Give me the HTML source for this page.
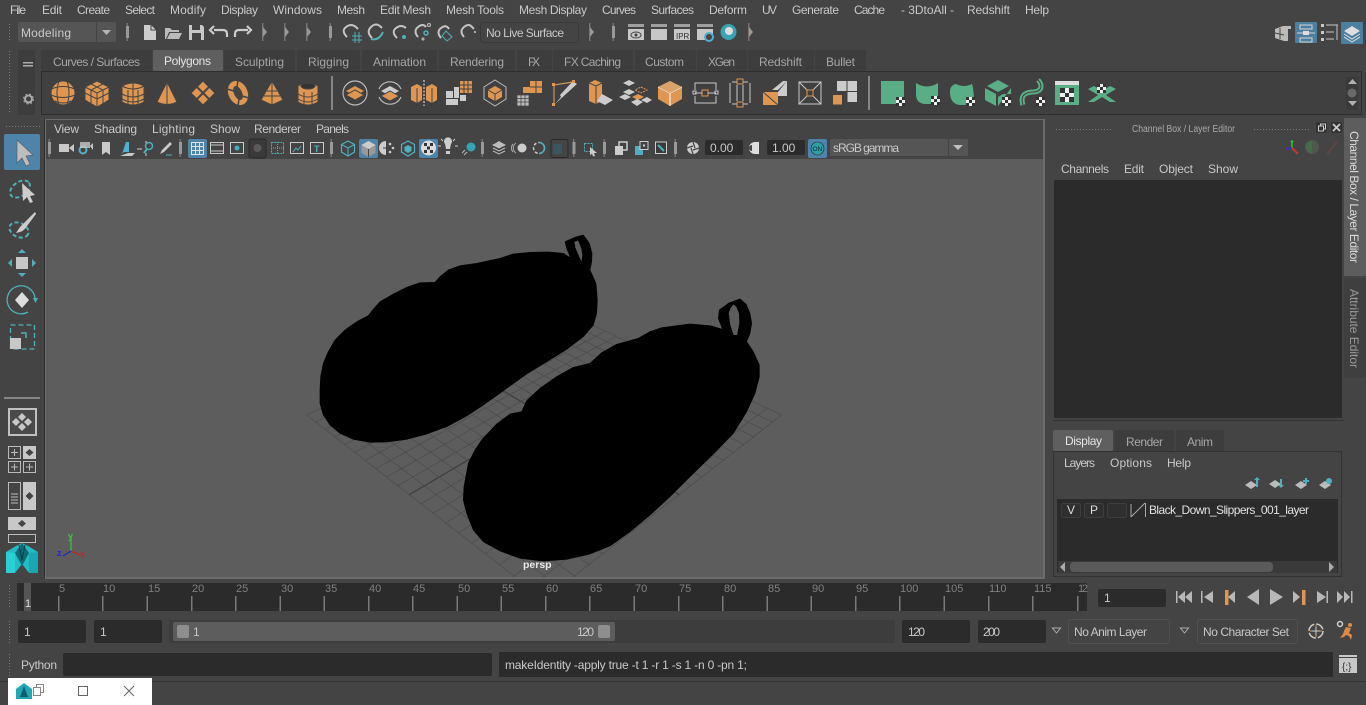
<!DOCTYPE html>
<html><head><meta charset="utf-8"><title>Maya</title>
<style>
html,body{margin:0;padding:0;background:#444;width:1366px;height:705px;overflow:hidden}
svg{display:block}
text{font-family:"Liberation Sans",sans-serif;font-size:12px;fill:#c8c8c8}
.tab{fill:#a6a6a6}
.d{fill:#2b2b2b}
.num{font-size:11px;fill:#808080}
.w{fill:#dcdcdc}
</style></head><body>
<svg width="1366" height="705" viewBox="0 0 1366 705" xmlns="http://www.w3.org/2000/svg">
<defs>
<pattern id="dots" width="3" height="3" patternUnits="userSpaceOnUse"><rect width="1" height="1" fill="#7a7a7a"/></pattern>
<clipPath id="vp"><rect x="46" y="159" width="997" height="418"/></clipPath>
<g id="knob"><rect x="-1" y="-9" width="1.4" height="18" fill="#777"/><rect x="-1.5" y="-6" width="3" height="12" fill="#999"/></g>
<g id="tsep"><rect x="-1" y="-9" width="1.4" height="18" fill="#777"/><path d="M0-5L4 0L0 5Z" fill="#999"/></g>
<g id="chk"><rect width="9" height="9" fill="#eee"/><rect width="3" height="3" fill="#333"/><rect x="6" width="3" height="3" fill="#333"/><rect x="3" y="3" width="3" height="3" fill="#333"/><rect y="6" width="3" height="3" fill="#333"/><rect x="6" y="6" width="3" height="3" fill="#333"/></g>
</defs>
<rect width="1366" height="705" fill="#444"/>

<!-- menu bar -->
<g>
<text x="10" y="14" textLength="16">File</text><text x="42" y="14" textLength="20">Edit</text><text x="77" y="14" textLength="33">Create</text><text x="125" y="14" textLength="30">Select</text><text x="170" y="14" textLength="36">Modify</text><text x="221" y="14" textLength="37">Display</text><text x="273" y="14" textLength="49">Windows</text><text x="337" y="14" textLength="28">Mesh</text><text x="380" y="14" textLength="51">Edit Mesh</text><text x="446" y="14" textLength="58">Mesh Tools</text><text x="519" y="14" textLength="68">Mesh Display</text><text x="602" y="14" textLength="34">Curves</text><text x="651" y="14" textLength="43">Surfaces</text><text x="709" y="14" textLength="38">Deform</text><text x="762" y="14" textLength="15">UV</text><text x="792" y="14" textLength="47">Generate</text><text x="854" y="14" textLength="31">Cache</text><text x="901" y="14" textLength="53">- 3DtoAll -</text><text x="967" y="14" textLength="43">Redshift</text><text x="1025" y="14" textLength="24">Help</text>
</g>

<!-- status line -->
<rect x="8" y="23" width="4" height="19" fill="url(#dots)"/>
<rect x="18" y="22" width="98" height="20" rx="2" fill="#555"/><rect x="96" y="22" width="1" height="20" fill="#444"/>
<path d="M102 30h9l-4.500 5z" fill="#b5b5b5"/>
<text x="21" y="37" textLength="50" fill="#d0d0d0">Modeling</text>
<use href="#knob" x="127.500" y="32"/>
<path d="M144 25h7l5 5v10h-12z" fill="#ccc"/><path d="M151 25v5h5" fill="none" stroke="#444"/>
<path d="M165 39V28h5l2 2h7v2h-10l-3 7zM167 39l3-6h12l-3 6z" fill="#bbb"/>
<path d="M189 25h13l2 2v13h-15z" fill="#c8c8c8"/><rect x="192" y="25" width="8" height="5" fill="#444"/><rect x="192" y="33" width="9" height="7" fill="#444"/>
<path d="M227 37v-3q0-4-4-4h-9M214 26l-4 4 4 4" fill="none" stroke="#ccc" stroke-width="2.200"/>
<path d="M235 37v-3q0-4 4-4h9M247 26l4 4-4 4" fill="none" stroke="#ccc" stroke-width="2.200"/>
<use href="#tsep" x="263" y="32"/><use href="#tsep" x="285" y="32"/><use href="#tsep" x="307" y="32"/><use href="#knob" x="330.500" y="32"/>
<g fill="none" stroke="#c4c4c4" stroke-width="2">
<path d="M347 37q-6-6-1-10t10 0l2 2"/><path d="M352 36h10M352 40h10M355 32v11M359 32v11" stroke="#4fb0b8" stroke-width="1"/>
<path d="M372 38q-6-6-1-11t10 0l1 1"/><path d="M371 39q8 2 12-7" stroke="#4fb0b8"/>
<path d="M397 38q-6-6-1-10t10 0"/><circle cx="404" cy="37" r="2" fill="#4fb0b8" stroke="none"/>
<path d="M418 37q-5-6 0-10t8 0"/><circle cx="429" cy="25" r="1.500" stroke-width="1"/><circle cx="426" cy="33" r="2" stroke="#4fb0b8" stroke-width="1.500"/><circle cx="423" cy="39" r="1" stroke-width="1"/>
<path d="M441 38q-5-6 0-10t8 1"/><path d="M446 31l6 6-5 4-5-5z" stroke="#4fb0b8" stroke-width="1"/>
<path d="M464 37q-5-6 0-10t8 0l2 2"/><circle cx="475" cy="32" r="1" fill="#ccc" stroke="none"/>
</g>
<rect x="480.500" y="22.500" width="98" height="20" rx="3" fill="#444" stroke="#3a3a3a"/>
<text x="486" y="37" textLength="78">No Live Surface</text>
<use href="#tsep" x="590" y="32"/><use href="#knob" x="613.500" y="32"/>
<g fill="#c8c8c8">
<path d="M628 24h16v3h-16z" opacity=".7"/><rect x="628" y="29" width="16" height="11"/><ellipse cx="636" cy="35" rx="5" ry="3" fill="none" stroke="#444"/><circle cx="636" cy="35" r="1.500" fill="#444"/>
<rect x="651" y="24" width="16" height="3" opacity=".7"/><rect x="651" y="29" width="16" height="11"/>
<rect x="674" y="24" width="16" height="3" opacity=".7"/><rect x="674" y="29" width="16" height="11"/><text x="676" y="39" style="font-size:8px;fill:#333">IPR</text>
<rect x="697" y="24" width="16" height="3" opacity=".7"/><rect x="697" y="29" width="16" height="11"/>
</g>
<circle cx="709" cy="37" r="4" fill="#444" stroke="#4fb0d0" stroke-width="2"/>
<circle cx="728.500" cy="32" r="8" fill="#35a5b5"/><circle cx="729" cy="31" r="4" fill="#ddd"/>
<use href="#tsep" x="749" y="32"/>
<!-- top right -->
<path d="M1275 29l8-3 8 0v3h-3v12h-4l-9-3z" fill="#bbb"/><path d="M1280 28v11M1275 33l9 2" stroke="#444"/>
<rect x="1295" y="22" width="22" height="21" rx="1" fill="#4d7f9f"/><g fill="none" stroke="#d5d5d5"><rect x="1300" y="25" width="12" height="4"/><rect x="1300" y="38" width="12" height="4"/><path d="M1297 33h6M1309 33h6"/></g><rect x="1303" y="31" width="6" height="4" fill="#ddd"/>
<g fill="none" stroke="#c8c8c8"><path d="M1326 25h12M1326 32h8M1326 39h8M1337 25v15"/></g><g fill="#c8c8c8"><rect x="1321" y="24" width="3" height="3"/><rect x="1321" y="31" width="3" height="3"/><rect x="1321" y="38" width="3" height="3"/></g>
<rect x="1341" y="22" width="22" height="22" rx="1" fill="#4d7f9f"/><path d="M1352 26l8 5-8 5-8-5z" fill="#ddd"/><path d="M1344 34l8 5 8-5M1344 37l8 5 8-5" fill="none" stroke="#ddd"/>

<!-- tabs -->
<rect x="8" y="50" width="4" height="62" fill="url(#dots)"/>
<rect x="18" y="50" width="17" height="65" fill="#3d3d3d"/>
<rect x="23" y="62" width="10" height="1.500" fill="#aaa"/><rect x="23" y="65" width="10" height="1.500" fill="#aaa"/>
<circle cx="28.500" cy="99" r="3.500" fill="none" stroke="#aaa" stroke-width="2"/><circle cx="28.500" cy="99" r="5" fill="none" stroke="#aaa" stroke-width="1" stroke-dasharray="2 2"/>
<rect x="41.500" y="71.500" width="1320" height="43" fill="#404040" stroke="#2e2e2e"/>
<g fill="#3d3d3d">
<path d="M41 71V52q0-2 2-2h109v21z"/><rect x="224" y="50" width="71" height="21" rx="2"/><rect x="297" y="50" width="63" height="21" rx="2"/><rect x="362" y="50" width="75" height="21" rx="2"/><rect x="439" y="50" width="76" height="21" rx="2"/><rect x="517" y="50" width="35" height="21" rx="2"/><rect x="553" y="50" width="80" height="21" rx="2"/><rect x="635" y="50" width="61" height="21" rx="2"/><rect x="697" y="50" width="50" height="21" rx="2"/><rect x="748" y="50" width="66" height="21" rx="2"/><rect x="815" y="50" width="51" height="21" rx="2"/>
</g>
<rect x="153" y="50" width="70" height="21" rx="2" fill="#5f5f5f"/>
<text class="tab" x="53" y="66" textLength="87">Curves / Surfaces</text><text x="164" y="65" textLength="47" style="fill:#e4e4e4">Polygons</text><text class="tab" x="235" y="66" textLength="49">Sculpting</text><text class="tab" x="308" y="66" textLength="41">Rigging</text><text class="tab" x="373" y="66" textLength="53">Animation</text><text class="tab" x="450" y="66" textLength="54">Rendering</text><text class="tab" x="528" y="66" textLength="12">FX</text><text class="tab" x="564" y="66" textLength="57">FX Caching</text><text class="tab" x="645" y="66" textLength="39">Custom</text><text class="tab" x="708" y="66" textLength="27">XGen</text><text class="tab" x="759" y="66" textLength="43">Redshift</text><text class="tab" x="826" y="66" textLength="29">Bullet</text>

<!-- shelf orange icons -->
<g fill="#df9650" stroke="#444" stroke-width="1">
<g transform="translate(63,93)"><circle r="12"/><path d="M-11.500-4Q0-9 11.500-4M-12 2Q0 7 12 2M-8 8Q0 12 8 8M-4-12Q-8 0-4 12M4-12Q8 0 4 12" fill="none"/></g>
<g transform="translate(97,94)"><path d="M0-13L12-7V6L0 13-12 6V-7Z"/><path d="M-12-7L0-1 12-7M0-1V13M-6-10L6-4V10M6-10L-6-4V10M-12-1L0 5 12-1" fill="none"/></g>
<g transform="translate(133,94)"><path d="M-11-8Q0-14 11-8V8Q0 14-11 8Z"/><path d="M-11-8Q0-2 11-8M-11 0Q0 6 11 0M-11 5Q0 11 11 5M0-12V12M-5-4V11M5-4V11" fill="none"/></g>
<g transform="translate(167,95)"><path d="M0-13L10 7Q0 12-10 7Z"/><path d="M0-13V10" fill="none"/></g>
<g transform="translate(203,93)"><path d="M0-12L12 0 0 12-12 0Z"/><path d="M-6-6L6 6M6-6L-6 6" stroke-width="2" fill="none"/></g>
<g transform="translate(238,93)"><ellipse rx="10" ry="13" transform="rotate(-25)"/><ellipse rx="3.500" ry="7" fill="#444" transform="rotate(-25)"/><path d="M-11-4L-4-2M4 3L11 5M0-13L-1-6M1 6L0 13" fill="none" stroke-width="1.500"/></g>
<g transform="translate(272,94)"><path d="M0-13L11 6 0 11-11 6Z"/><path d="M0-13V11M-5-3L5-3M-8 2L8 2" fill="none"/></g>
<g transform="translate(308,94)"><path d="M-10-8Q0-14 10-8V8Q0 14-10 8Z"/><ellipse cy="-8" rx="7" ry="3" fill="#333"/><path d="M-10 0Q0 6 10 0M-10 5Q0 11 10 5M-4-2V11M4-2V11" fill="none"/></g>
</g>
<rect x="331" y="76" width="2" height="34" fill="#858585"/>
<!-- combine etc -->
<g transform="translate(355,93)"><circle r="12" fill="none" stroke="#bbb" stroke-width="1.200"/><path d="M0-7L9-2 0 3-9-2Z" fill="#df9650"/><path d="M-9 2L0 7 9 2 0 -3Z" fill="#df9650" stroke="#444"/></g>
<g transform="translate(390,93)"><path d="M-11-4A12 12 0 0 1 11-4M-11 4A12 12 0 0 0 11 4" fill="none" stroke="#bbb" stroke-width="1.200"/><path d="M0-7L9-2 0 3-9-2Z" fill="#ccc"/><path d="M-9 3L0 8 9 3 0-2Z" fill="#df9650" stroke="#444"/></g>
<g transform="translate(424,93)"><path d="M-13-6L-7-9-2-6V7L-7 10-13 7Z" fill="#df9650"/><path d="M2-6L8-9 13-6V7L8 10 2 7Z" fill="#df9650"/><path d="M-7-5V10M8-5V10" stroke="#444"/><path d="M0-13V13" stroke="#eee" stroke-dasharray="2 1.500"/></g>
<g transform="translate(459,93)"><rect x="1" y="-12" width="12" height="12" fill="#df9650"/><path d="M5-12v12M9-12v12M1-8h12M1-4h12" stroke="#444"/><rect x="-13" y="-2" width="7" height="7" fill="#ccc"/><rect x="-5" y="-6" width="5" height="11" fill="#ccc"/><rect x="-13" y="6" width="12" height="6" fill="#ccc"/><rect x="1" y="2" width="6" height="6" fill="#ccc"/></g>
<g transform="translate(495,93)"><path d="M0-13L11-6V6L0 13-11 6V-6Z" fill="none" stroke="#bbb"/><path d="M0-7L7-3V4L0 8-7 4V-3Z" fill="#df9650"/><path d="M-7-3L0 1 7-3M0 1V8" stroke="#444" fill="none"/></g>
<g transform="translate(530,93)"><rect x="0" y="-12" width="12" height="12" fill="#df9650"/><rect x="-7" y="-6" width="7" height="6" fill="#df9650"/><path d="M6-12v12M0-6h12" stroke="#444"/><path d="M-13 2h12v11h-12zM-13 5.500h12M-13 9h12M-9 2v11M-5 2v11" fill="#bbb" stroke="#444" stroke-width=".8"/></g>
<g transform="translate(565,93)"><path d="M-11-8L8-11M-11-8V11" fill="none" stroke="#c8955c" stroke-width="1.200"/><path d="M-10 11L12-9 8-12-5 2 -4 4Z" fill="#ccc"/><rect x="-13" y="-10" width="3" height="3" fill="#df9650"/><rect x="7" y="-13" width="3" height="3" fill="#df9650"/><rect x="-13" y="10" width="3" height="3" fill="#df9650"/></g>
<g transform="translate(600,93)"><path d="M-11-10L-5-13 2-10V8L-4 11-11 8Z" fill="#df9650"/><path d="M-11-10L-4-7 2-10M-4-7V11" stroke="#444" fill="none"/><path d="M2 1L13 7 5 12-3 8Z" fill="#ccc"/></g>
<g transform="translate(635,93)"><path d="M-6-13L0-10-6-7-12-10Z" fill="#ccc"/><path d="M6-6L12-3 6 0 0-3Z" fill="none" stroke="#df9650" stroke-dasharray="2 1"/><path d="M-12-1L-6-4 0-1-6 2Z" fill="#ccc"/><path d="M-3 4L3 1 9 4 3 7Z" fill="#df9650"/><path d="M-16 4L-10 1-4 4-10 7Z" fill="#ccc"/><path d="M6 7L12 4 17 7 12 10Z" fill="#ccc"/><path d="M-4 9L2 6 8 9 2 13Z" fill="#ccc"/></g>
<g transform="translate(670,93)"><path d="M0-12L12-6V6L0 13-12 6V-6Z" fill="#df9650"/><path d="M-12-6L0 0 12-6M0 0V13" stroke="#eee" stroke-width="1.200" fill="none"/><path d="M0-12L12-6 0 0-12-6Z" fill="#d8a26a"/></g>
<g fill="none" stroke="#c8c8c8">
<g transform="translate(705,93)"><path d="M-10-3V-10H11V-3M-10 3V10H11V3"/><rect x="-3" y="-3" width="6" height="6" stroke="#df9650"/><path d="M-10 0H-3M3 0H11"/><rect x="-12" y="-2" width="3" height="3" /><rect x="10" y="-2" width="3" height="3"/></g>
<g transform="translate(740,93)"><path d="M-10-10V10M10-10V10M-3-8V8M3-8V8M-8-11H-3M3-11H8M-8 11H-3M3 11H8"/><rect x="-3" y="-14" width="6" height="5" stroke="#df9650"/><rect x="-3" y="9" width="6" height="5" stroke="#df9650"/></g>
<g transform="translate(810,93)"><rect x="-11" y="-11" width="22" height="22"/><path d="M-11-11L-3-3M11-11L3-3M-11 11L-3 3M11 11L3 3"/><rect x="-3" y="-3" width="6" height="6" stroke="#df9650"/></g>
</g>
<g transform="translate(775,93)"><path d="M-12-1H3V12H-12Z" fill="#df9650"/><path d="M-12-1L3 12" stroke="#444"/><path d="M3-1L12-12V3H3Z" fill="#ccc"/><path d="M-3-3L8-12H12L3-3Z" fill="#ccc"/></g>
<g transform="translate(845,93)"><rect x="-8" y="-12" width="9.500" height="10" fill="#ccc"/><rect x="2.500" y="-12" width="9.500" height="10" fill="#ccc"/><rect x="2.500" y="-1" width="9.500" height="10" fill="#ccc"/><rect x="-12" y="2" width="9" height="9.500" fill="#df9650"/></g>
<rect x="868" y="76" width="2" height="34" fill="#858585"/>
<!-- green -->
<g fill="#5aae86">
<rect x="881" y="81" width="23" height="23"/><use href="#chk" x="896" y="97"/>
<path d="M916 83Q927 90 938 83V104H926Q916 104 916 94Z"/><use href="#chk" x="931" y="96"/>
<path d="M950 92Q950 85 956 84Q964 88 972 84Q974 90 974 105H960Q950 104 950 92Z"/><use href="#chk" x="966" y="97"/>
<path d="M998 80l11 6-11 6-11-6zM985 88l11 6v12l-11-6zM1011 88v6h-8l-5 3v9z"/><use href="#chk" x="1002" y="97"/>
<path d="M1023 105q-4-12 9-13q9 0 9-6q0-3-3-6" fill="none" stroke="#5aae86" stroke-width="5"/><path d="M1023 105q-4-12 9-13q9 0 9-6q0-3-3-6" fill="none" stroke="#404040" stroke-width="1"/><use href="#chk" x="1036" y="97"/>
<rect x="1055" y="81" width="24" height="24"/><rect x="1055" y="81" width="24" height="4" fill="#ddd"/><rect x="1060" y="88" width="14" height="14" fill="#eee"/><g fill="#333"><rect x="1060" y="88" width="5" height="5"/><rect x="1069" y="88" width="5" height="5"/><rect x="1065" y="93" width="4" height="4"/><rect x="1060" y="97" width="5" height="5"/><rect x="1069" y="97" width="5" height="5"/></g>
<path d="M1088 89l6-3 8 5 8-5 6 3-10 6 10 7h-6l-8-5-8 5h-6l10-7z"/><use href="#chk" x="1097" y="84"/>
</g>
<!-- shelf scroller -->
<rect x="1346" y="77" width="12" height="33" fill="#3a3a3a"/><path d="M1348 84h9l-4.500-5zM1348 101h9l-4.500 5z" fill="#b0b0b0"/><circle cx="1352" cy="93" r="4.500" fill="#6a6a6a"/>

<!-- left toolbar -->
<rect x="4" y="125" width="36" height="4" fill="url(#dots)"/>
<rect x="4" y="134" width="36" height="36" rx="2" fill="#4f84aa"/>
<path d="M17 140L33 155 26 156 30 164 26 166 22 158 17 163Z" fill="#bdbdbd" stroke="#555" stroke-width=".6"/>
<ellipse cx="20" cy="189" rx="11" ry="7" transform="rotate(-35 20 189)" fill="none" stroke="#4fb0b8" stroke-width="2" stroke-dasharray="4 2.500"/>
<path d="M22 183L35 195 30 196 33 202 30 203 27 197 23 201Z" fill="#ccc"/>
<ellipse cx="19" cy="230" rx="10" ry="7" transform="rotate(25 19 230)" fill="none" stroke="#4fb0b8" stroke-width="2" stroke-dasharray="4 2.500"/>
<path d="M35 212L20 227 16 233Q24 232 27 226L36 214Z" fill="#ccc"/>
<rect x="16" y="257" width="12" height="12" fill="#c8c8c8"/>
<path d="M18 253l4-4 4 4zM18 273l4 4 4-4zM12 259l-4 4 4 4zM32 259l4 4-4 4z" fill="#4fb0b8"/>
<path d="M22 292l7 8-7 8-7-8z" fill="#ddd"/>
<path d="M35 298A14 14 0 1 0 28 312" fill="none" stroke="#4fb0b8" stroke-width="1.300"/><path d="M33 298h5l-2.500 5z" fill="#4fb0b8"/>
<rect x="10.500" y="325" width="24" height="24" fill="none" stroke="#4fb0b8" stroke-width="1.300" stroke-dasharray="5 3"/>
<rect x="10" y="338" width="11" height="11" fill="#c8c8c8"/><path d="M21 333h5v5" fill="none" stroke="#4fb0b8" stroke-width="1.500"/>
<rect x="4" y="397" width="36" height="2" fill="#858585"/>
<rect x="9" y="409" width="27" height="26" fill="#4a4a4a" stroke="#c0c0c0" stroke-width="2"/>
<path d="M22 413l4 4-4 4-4-4zM22 423l4 4-4 4-4-4zM16 418l4 4-4 4-4-4zM28 418l4 4-4 4-4-4z" fill="#c8c8c8"/>
<g fill="none" stroke="#bbb"><rect x="8.500" y="446.500" width="12" height="12"/><rect x="8.500" y="461.500" width="12" height="11"/><rect x="23.500" y="461.500" width="12" height="11"/><path d="M11 452.500h7M14.500 449v7M11 467h7M14.500 463.500v7M26 467h7M29.500 463.500v7"/><rect x="8.500" y="482.500" width="12" height="27"/><path d="M11 494h7M11 497h7M11 500h7M11 503h7"/><rect x="8.500" y="534.500" width="27" height="8"/></g>
<rect x="23" y="446" width="13" height="13" fill="#c8c8c8"/><path d="M29.500 449l4 3.500-4 3.500-4-3.500z" fill="#444"/>
<rect x="23" y="482" width="13" height="28" fill="#c8c8c8"/><path d="M29.500 492l4 4-4 4-4-4z" fill="#444"/>
<rect x="8" y="517" width="28" height="13" fill="#c8c8c8"/><path d="M22 520l4 3.500-4 3.500-4-3.500z" fill="#444"/>
<rect x="0" y="543" width="44" height="32" fill="#444"/>
<path d="M6 552L16 546 22 543 28 546 38 552V573H29L22 564 15 573H6Z" fill="#22bcc4"/>
<path d="M15 553L22 543 29 553 22 566Z" fill="#0f6a73"/><path d="M6 552L15 553 15 573H6Z" fill="#2ad0d4"/><path d="M38 552L29 553 29 573H38Z" fill="#1aa8b0"/>
<path d="M19 545L22 560M25 545L22 560" stroke="#0a3e46"/>
<rect x="44" y="119" width="1" height="459" fill="#2f2f2f"/>

<!-- viewport -->
<rect x="45" y="119" width="1000" height="460" fill="#6c6c6c"/>
<rect x="46" y="120" width="997" height="39" fill="#444"/>
<rect x="46" y="159" width="997" height="418" fill="#5d5d5d"/>
<text x="54" y="133" textLength="25">View</text><text x="94" y="133" textLength="43">Shading</text><text x="152" y="133" textLength="43">Lighting</text><text x="210" y="133" textLength="30">Show</text><text x="254" y="133" textLength="47">Renderer</text><text x="316" y="133" textLength="33">Panels</text>
<!-- viewport toolbar -->
<use href="#knob" x="49.500" y="148"/><use href="#knob" x="180.500" y="148"/><use href="#knob" x="331.500" y="148"/><use href="#knob" x="482.500" y="148"/><use href="#knob" x="574" y="148"/><use href="#knob" x="604.500" y="148"/><use href="#knob" x="675.500" y="148"/>
<g fill="#c8c8c8">
<rect x="59" y="144" width="10" height="8"/><path d="M69 148l5-4v8z"/>
<circle cx="83" cy="150" r="3.500" fill="none" stroke="#4fb0d0" stroke-width="2"/><rect x="80" y="142" width="10" height="6" opacity=".8"/><path d="M90 146l3-3v7z"/>
<path d="M102 142h8v13l-4-3-4 3z"/>
<path d="M122 154l4-12 3 0 0 10h-5z" fill="#4fb0d0"/><path d="M120 156h12l3-3-7 0z"/>
<path d="M142 149h-5M146 144v-3M146 153v3" stroke="#ccc" fill="none"/><circle cx="149" cy="146" r="3.500" fill="none" stroke="#4fb0b8" stroke-width="1.500"/><path d="M147 149l-3 4" stroke="#4fb0b8" stroke-width="2"/>
<path d="M160 154l2-4 8-8 2 2-8 8z"/><path d="M166 155h6" stroke="#4fb0b8"/>
</g>
<rect x="188" y="139" width="19" height="19" rx="2" fill="#4f84aa"/>
<rect x="191.500" y="142.500" width="12" height="12" fill="none" stroke="#e2e2e2"/><path d="M195.500 142.500v12M199.500 142.500v12M191.500 146.500h12M191.500 150.500h12" stroke="#e2e2e2"/>
<rect x="210.500" y="142.500" width="13" height="11" fill="none" stroke="#c8c8c8"/><path d="M210 145h14M210 151h14" stroke="#c8c8c8"/>
<rect x="230.500" y="142.500" width="13" height="11" fill="none" stroke="#c8c8c8"/><circle cx="237" cy="148" r="2.500" fill="#3fb0c0"/>
<rect x="249" y="139" width="17" height="19" rx="2" fill="#3a3a3a" stroke="#2a2a2a"/><circle cx="257.500" cy="148" r="4" fill="#5a5a5a"/>
<rect x="271.500" y="142.500" width="12" height="11" fill="none" stroke="#4fb0b8" stroke-dasharray="2 1"/><path d="M277.500 142v12M271 148h13" stroke="#4fb0b8" stroke-dasharray="1 1"/>
<rect x="290.500" y="142.500" width="13" height="11" fill="none" stroke="#c8c8c8"/><path d="M293 152l3-4 2 2 3-4" stroke="#4fb0b8" fill="none"/>
<rect x="310.500" y="142.500" width="13" height="11" fill="none" stroke="#c8c8c8"/><text x="314" y="152" style="font-size:9px;font-weight:bold;fill:#4fb0c0">T</text>
<path d="M348 141l6.500 3.500v7.500l-6.500 4-6.500-4v-7.500z" fill="none" stroke="#4fb0c0" stroke-width="1.200"/><path d="M341.500 144.500l6.500 3.500 6.500-3.500M348 148v8" fill="none" stroke="#4fb0c0"/>
<rect x="359" y="139" width="19" height="19" rx="2" fill="#4f84aa"/><path d="M368.500 141l7 4v8l-7 4-7-4v-8z" fill="#999"/><path d="M361.500 145l7 4 7-4-7-4z" fill="#ccc"/><path d="M368.500 149v8" stroke="#444"/>
<path d="M386 141a7 7 0 0 0 0 14z" fill="#ccc"/><circle cx="390" cy="144" r="1.300" fill="#ccc"/><circle cx="393" cy="148" r="1.300" fill="#ccc"/><circle cx="390" cy="152" r="1.300" fill="#ccc"/><path d="M383 148h3" stroke="#444"/>
<path d="M408 141l6.500 3.500v7.500l-6.500 4-6.500-4v-7.500z" fill="none" stroke="#4fb0c0" stroke-width="1.200"/><path d="M408 145l3.500 2v4l-3.500 2-3.500-2v-4z" fill="#4fb0c0"/>
<rect x="419" y="139" width="19" height="19" rx="2" fill="#4f84aa"/><circle cx="428.500" cy="148" r="7.500" fill="#ddd"/><g fill="#333"><rect x="424" y="143" width="3" height="3"/><rect x="430" y="143" width="3" height="3"/><rect x="427" y="146.500" width="3" height="3"/><rect x="424" y="150" width="3" height="3"/><rect x="430" y="150" width="3" height="3"/></g>
<path d="M445 144a4 4 0 1 1 6 0l-1 5h-4zM446 151h4v3h-4z" fill="#ccc"/><path d="M441 146h-3M458 146h-3M443 141l-2-2M453 141l2-2" stroke="#ccc"/>
<circle cx="471" cy="147" r="4.500" fill="#35a5b5"/><path d="M462 153l3-3M464 155l3-3" stroke="#bbb"/>
<path d="M499 142l6 3-6 3-6-3zM493 148l6 3 6-3M493 151l6 3 6-3" fill="none" stroke="#bbb"/><path d="M499 141l6 4-6 3-6-3z" fill="#bbb"/>
<circle cx="522" cy="148" r="4.500" fill="#ccc"/><path d="M516 143a6 6 0 0 0 0 10M513 144a6 6 0 0 0 0 8" fill="none" stroke="#aaa"/>
<circle cx="539" cy="148" r="5.500" fill="none" stroke="#ccc" stroke-width="1.500" stroke-dasharray="3 2"/><path d="M539 142.500a5.500 5.500 0 0 1 0 11" fill="none" stroke="#4fb0c0" stroke-width="1.500"/>
<rect x="551" y="139.500" width="17" height="18" rx="2" fill="#454545" stroke="#2a2a2a"/><rect x="553" y="144" width="9" height="10" fill="#3a5560"/>
<rect x="584.500" y="143.500" width="8" height="8" fill="none" stroke="#4fb0b8" stroke-dasharray="2 1"/><path d="M590 147l7 6-3 0 1 3-2 .5-1-3-2 2z" fill="#ccc"/>
<path d="M615 146h8v9h-8z" fill="#ccc"/><path d="M619 146v-4h8v8h-4" fill="none" stroke="#ccc" stroke-width="1.500"/>
<path d="M635 146h8v9h-8z" fill="#4fb0c0"/><rect x="640" y="141.500" width="8" height="8" fill="#444" stroke="#ccc"/><rect x="643" y="144.500" width="2" height="2" fill="#ccc"/>
<rect x="655.500" y="142" width="11" height="11.500" fill="#3a3a3a" stroke="#ccc"/><path d="M658 145l6 6" stroke="#4fb0c0" stroke-width="2"/>
<circle cx="693" cy="148" r="6" fill="#ccc"/><path d="M693 142l2 6M699 148l-6 2M693 154l-2-6M687 148l6-2" stroke="#444" stroke-width="1.200"/>
<rect x="705" y="140" width="38" height="15" rx="2" class="d"/><text x="710" y="152" fill="#c0c0c0">0.00</text>
<path d="M755 142h4v12h-4a6 6 0 0 1 0-12" fill="#ddd"/><path d="M752 145a3 3 0 0 0 0 6z" fill="#444"/>
<rect x="767" y="140" width="38" height="15" rx="2" class="d"/><text x="772" y="152" fill="#c0c0c0">1.00</text>
<rect x="808" y="139" width="19" height="19" rx="2" fill="#4f84aa"/><circle cx="817.500" cy="148.500" r="6.500" fill="#2fa0a8" stroke="#222" stroke-width=".6"/><text x="812.500" y="151" style="font-size:6.500px;fill:#123">ON</text>
<rect x="830" y="139" width="118" height="17" fill="#555" rx="1"/><rect x="949" y="139" width="19" height="17" fill="#555" rx="1"/><path d="M953 145h10l-5 5z" fill="#c0c0c0"/>
<text x="833" y="152" textLength="66" fill="#e0e0e0">sRGB gamma</text>

<!-- scene -->
<g clip-path="url(#vp)">
<g transform="translate(300,230) scale(.33333)">
<g id="gridA" fill="none" stroke="#4c4c4c" stroke-width="2.200">
<path d="M20 555L735 215M47.300 576.300L763.900 228.800M75.300 598.200L793.400 243M104 620.600L823.500 257.400M133.400 643.600L854.100 272M163.500 667.200L885.400 287M194.400 691.400L917.400 302.300M226.200 716.200L950 317.900M258.800 741.600L983.300 333.900M292.200 767.800L1017.200 350.200M361.900 822.300L1087.400 383.800M398.200 850.700L1123.700 401.100M435.600 879.800L1160.700 418.900M474 909.900L1198.600 437M513.500 940.800L1237.400 455.600M554.300 972.600L1277 474.500M596.200 1005.400L1317.500 494M639.400 1039.200L1359 513.800M684 1074L1401.500 534.200M730 1110L1445 555"/>
<path d="M326.600 794.700L1052 366.800" stroke="#404040" stroke-width="4"/>
</g>
<use href="#gridA" transform="translate(1465,0) scale(-1,1)"/>
<path fill="#000" fill-rule="evenodd" stroke="#000" stroke-width="2" stroke-linejoin="round" d="M812 84L790 70 745 66 690 67 640 72 600 85 530 100 480 107 445 120 420 140 405 157 360 158 320 172 280 192 240 215 218 240 205 257 170 275 135 300 105 330 85 365 70 400 62 440 60 480 60 520 70 555 90 585 120 610 160 628 210 637 260 636 320 628 380 612 440 590 500 558 560 518 620 475 680 432 740 395 800 358 850 320 880 285 890 250 892 210 888 160 870 120 875 95 876 70 868 40 850 15 825 22 795 35 800 55ZM822 35L835 30 845 55 848 75 845 98 832 70 825 52Z"/>
<path fill="#000" fill-rule="evenodd" stroke="#000" stroke-width="2" stroke-linejoin="round" d="M1268 298L1255 265 1258 240 1285 220 1320 207 1338 222 1350 250 1355 280 1350 310 1340 335 1360 365 1378 405 1378 440 1365 490 1340 545 1300 610 1240 672 1170 740 1110 800 1050 855 990 905 930 948 870 972 800 988 730 993 660 985 600 963 550 935 520 900 500 850 490 810 492 770 505 700 525 660 545 630 590 582 630 552 665 545 680 512 720 475 770 440 820 412 870 400 905 368 950 343 1015 325 1050 305 1085 293 1170 282 1230 287ZM1300 222L1290 235 1285 250 1290 285 1300 316 1312 316 1319 280 1318 250 1310 230Z"/>
</g>
<!-- axis -->
<path d="M71 551V536" fill="none" stroke-width="1.200" stroke="#3c3"/>
<path d="M71 551L63 556" stroke="#22c" stroke-width="1.200"/><path d="M71 551L80 555" stroke="#c22" stroke-width="1.200"/>
<text x="68" y="539" style="font-size:9px;font-weight:bold;fill:#3fc03f">y</text>
<text x="57" y="556" style="font-size:9px;font-weight:bold;fill:#2525c8">z</text>
<text x="80" y="557" style="font-size:9px;font-weight:bold;fill:#c82525">x</text>
<text x="523" y="568" style="font-size:10.500px;font-weight:bold;fill:#e8e8e8">persp</text>
</g>

<!-- right panel -->
<rect x="1055" y="127" width="58" height="4" fill="url(#dots)"/><rect x="1254" y="127" width="56" height="4" fill="url(#dots)"/>
<text x="1132" y="132" style="font-size:10px;fill:#aaa" textLength="103" lengthAdjust="spacingAndGlyphs">Channel Box / Layer Editor</text>
<rect x="1316" y="122" width="11" height="11" rx="1.500" fill="#333"/><path d="M1318.500 126h5v5h-5zM1320.500 126v-2h5v5h-2" fill="none" stroke="#ccc"/>
<rect x="1331" y="122" width="11" height="11" rx="1.500" fill="#333"/><path d="M1333 124l7 7M1340 124l-7 7" stroke="#ccc" stroke-width="1.800"/>
<path d="M1292 148V141" stroke="#3a3" stroke-width="2"/><path d="M1290 142l2-2 2 2z" fill="#3c3"/><path d="M1292 148L1285 149" stroke="#33b" stroke-width="2"/><path d="M1292 148L1298 154" stroke="#c33" stroke-width="2"/>
<circle cx="1312" cy="147" r="6.500" fill="#4c5a4c" stroke="#555"/><path d="M1312 141a6 6 0 0 0 0 12z" fill="#3f7a48" opacity=".6"/>
<path d="M1327 154l11-13" stroke="#5f4545" stroke-width="2"/>
<text x="1061" y="173" textLength="48">Channels</text><text x="1124" y="173" textLength="20">Edit</text><text x="1159" y="173" textLength="34">Object</text><text x="1208" y="173" textLength="30">Show</text>
<rect x="1054" y="180" width="288" height="238" class="d"/>
<rect x="1053" y="420" width="291" height="1" fill="#333"/>
<!-- side tabs -->
<rect x="1344" y="118" width="22" height="158" fill="#5d5d5d" rx="1"/>
<text transform="translate(1350,131) rotate(90)" textLength="132" style="fill:#dcdcdc">Channel Box / Layer Editor</text>
<rect x="1344" y="278" width="22" height="100" fill="#3f3f3f"/>
<text transform="translate(1350,289) rotate(90)" textLength="79" style="fill:#999">Attribute Editor</text>
<!-- layer tabs -->
<rect x="1053" y="430" width="60" height="21" rx="2" fill="#5f5f5f"/><rect x="1115" y="430" width="59" height="21" rx="2" fill="#3d3d3d"/><rect x="1176" y="430" width="48" height="21" rx="2" fill="#3d3d3d"/>
<text x="1065" y="445" textLength="37" style="fill:#e4e4e4">Display</text><text class="tab" x="1126" y="446" textLength="37">Render</text><text class="tab" x="1187" y="446" textLength="26">Anim</text>
<rect x="1053.500" y="451.500" width="288" height="125" fill="#444" stroke="#333"/>
<text x="1064" y="467" textLength="31">Layers</text><text x="1110" y="467" textLength="42">Options</text><text x="1167" y="467" textLength="24">Help</text>
<g>
<path d="M1245 485l6-4 6 4-6 4z" fill="#bbb"/><path d="M1254 480l3-3 3 3h-2v7h-2v-7z" fill="#4fb0c0"/>
<path d="M1269 484l6-4 6 4-6 4z" fill="#bbb"/><path d="M1278 485l3 3 3-3h-2v-6h-2v6z" fill="#4fb0c0"/>
<path d="M1295 485l6-4 6 4-6 4z" fill="#bbb"/><path d="M1303 481h6M1306 478v6" stroke="#4fb0c0" stroke-width="2"/>
<path d="M1319 485l6-4 6 4-6 4z" fill="#bbb"/><circle cx="1329" cy="481" r="3" fill="#4fb0c0"/>
</g>
<rect x="1057" y="499" width="281" height="74" class="d"/>
<g fill="#2f2f2f" stroke="#3e3e3e"><rect x="1061.500" y="503.500" width="19" height="14" rx="2"/><rect x="1084.500" y="503.500" width="19" height="14" rx="2"/><rect x="1107.500" y="503.500" width="19" height="14" rx="2"/></g>
<text x="1067" y="514" class="w">V</text><text x="1090" y="514" class="w">P</text>
<path d="M1131 517l14-14M1145.500 503v14M1131 504v13" fill="none" stroke="#aaa"/>
<text x="1149" y="514" textLength="160" style="fill:#e0e0e0">Black_Down_Slippers_001_layer</text>
<rect x="1058" y="561" width="279" height="12" fill="#3a3a3a"/><rect x="1070" y="562" width="203" height="10" rx="4" fill="#5a5a5a"/>
<path d="M1065 562v10l-5-5zM1329 562v10l5-5z" fill="#aaa"/>

<!-- timeline -->
<rect x="8" y="583" width="4" height="25" fill="url(#dots)"/><rect x="8" y="620" width="4" height="23" fill="url(#dots)"/><rect x="8" y="652" width="4" height="25" fill="url(#dots)"/>
<rect x="17" y="583" width="1070" height="28" class="d"/>
<rect x="24" y="583" width="7" height="28" fill="#555"/>
<text x="25" y="607" style="font-size:11px;fill:#ddd">1</text>
<g fill="#7a7a7a">
<rect x="58" y="596" width="1.500" height="15"/><rect x="102" y="596" width="1.500" height="15"/><rect x="146.500" y="596" width="1.500" height="15"/><rect x="191" y="596" width="1.500" height="15"/><rect x="235" y="596" width="1.500" height="15"/><rect x="279.500" y="596" width="1.500" height="15"/><rect x="323.500" y="596" width="1.500" height="15"/><rect x="368" y="596" width="1.500" height="15"/><rect x="412" y="596" width="1.500" height="15"/><rect x="456.500" y="596" width="1.500" height="15"/><rect x="500.500" y="596" width="1.500" height="15"/><rect x="545" y="596" width="1.500" height="15"/><rect x="589" y="596" width="1.500" height="15"/><rect x="633.500" y="596" width="1.500" height="15"/><rect x="678" y="596" width="1.500" height="15"/><rect x="722" y="596" width="1.500" height="15"/><rect x="766.500" y="596" width="1.500" height="15"/><rect x="810.500" y="596" width="1.500" height="15"/><rect x="855" y="596" width="1.500" height="15"/><rect x="899" y="596" width="1.500" height="15"/><rect x="943.500" y="596" width="1.500" height="15"/><rect x="988" y="596" width="1.500" height="15"/><rect x="1032" y="596" width="1.500" height="15"/><rect x="1077" y="596" width="1.500" height="15"/>
</g>
<g class="nums">
<text class="num" x="59" y="592">5</text><text class="num" x="103" y="592">10</text><text class="num" x="148" y="592">15</text><text class="num" x="192" y="592">20</text><text class="num" x="236" y="592">25</text><text class="num" x="281" y="592">30</text><text class="num" x="325" y="592">35</text><text class="num" x="369" y="592">40</text><text class="num" x="413" y="592">45</text><text class="num" x="458" y="592">50</text><text class="num" x="502" y="592">55</text><text class="num" x="546" y="592">60</text><text class="num" x="590" y="592">65</text><text class="num" x="635" y="592">70</text><text class="num" x="679" y="592">75</text><text class="num" x="724" y="592">80</text><text class="num" x="768" y="592">85</text><text class="num" x="812" y="592">90</text><text class="num" x="856" y="592">95</text><text class="num" x="900" y="592">100</text><text class="num" x="945" y="592">105</text><text class="num" x="989" y="592">110</text><text class="num" x="1034" y="592">115</text><text class="num" x="1078" y="592" textLength="10">12</text>
</g>
<rect x="1098" y="589" width="68" height="18" rx="2" class="d"/><text x="1104" y="602" fill="#bbb">1</text>
<!-- transport -->
<g fill="#b8b8b8">
<rect x="1176" y="591" width="1.500" height="12"/><path d="M1185 591v12l-7-6zM1192 591v12l-7-6z"/>
<rect x="1201" y="591" width="1.500" height="12"/><path d="M1213 591v12l-9-6z"/>
<rect x="1225" y="590" width="3.500" height="15" fill="#df9650"/><path d="M1235 591v12l-7-6z"/>
<path d="M1259 589v16l-12-8z"/>
<path d="M1270 589v16l13-8z"/>
<path d="M1293 591v12l7-6z"/><rect x="1302" y="590" width="3.500" height="15" fill="#df9650"/>
<path d="M1317 591v12l9-6z"/><rect x="1326.500" y="591" width="1.500" height="12"/>
<path d="M1337 591v12l6-6zM1344 591v12l6-6z"/><rect x="1351" y="591" width="1.500" height="12"/>
</g>

<!-- range -->
<rect x="18" y="620" width="68" height="23" rx="2" class="d"/><text x="24" y="636" fill="#bbb">1</text>
<rect x="94" y="620" width="68" height="23" rx="2" class="d"/><text x="100" y="636" fill="#bbb">1</text>
<rect x="169" y="620" width="726" height="23" fill="#3d3d3d"/>
<rect x="173" y="622" width="442" height="19" rx="2" fill="#5d5d5d"/>
<rect x="177" y="625" width="12" height="13" rx="2" fill="#8e8e8e"/><rect x="598" y="625" width="12" height="13" rx="2" fill="#8e8e8e"/>
<text x="193" y="636" fill="#bbb">1</text><text x="577" y="636" textLength="17" fill="#bbb">120</text>
<rect x="902" y="620" width="68" height="23" rx="2" class="d"/><text x="908" y="636" textLength="17" fill="#bbb">120</text>
<rect x="978" y="620" width="68" height="23" rx="2" class="d"/><text x="983" y="636" textLength="17" fill="#bbb">200</text>
<path d="M1052.500 628h8l-4 5z M1180.500 628h8l-4 5z" fill="none" stroke="#aaa"/>
<rect x="1068.500" y="619.500" width="101" height="24" rx="2" fill="#444" stroke="#505050"/><text x="1074" y="636" textLength="73" fill="#bbb">No Anim Layer</text>
<rect x="1197.500" y="619.500" width="100" height="24" rx="2" fill="#444" stroke="#505050"/><text x="1203" y="636" textLength="86" fill="#bbb">No Character Set</text>
<circle cx="1316" cy="631" r="7" fill="none" stroke="#ccc" stroke-width="1.500" stroke-dasharray="9 2"/><path d="M1316 625v12M1310 631h12" stroke="#df9650" stroke-width="1" /><path d="M1316 627v8M1312 631h8" stroke="#ccc"/>
<circle cx="1340" cy="624" r="2.500" fill="none" stroke="#ccc" stroke-width="1.500"/>
<path d="M1346 627l5 1-2 5 3 2-1 5-2-4-3-1-2 2-4 1 3-4 1-3z" fill="#df8a40"/><circle cx="1350" cy="625" r="2" fill="#df8a40"/>

<!-- python -->
<text x="21" y="669" textLength="36" fill="#d0d0d0">Python</text>
<rect x="63" y="653" width="429" height="23" rx="2" class="d"/>
<rect x="499" y="652" width="834" height="25" class="d"/>
<text x="505" y="669" textLength="242" fill="#d8d8d8">makeIdentity -apply true -t 1 -r 1 -s 1 -n 0 -pn 1;</text>
<rect x="1339" y="655" width="18" height="18" fill="#c8c8c8"/><rect x="1339" y="657" width="18" height="1" fill="#444"/>
<text x="1342" y="670" style="font-size:10px;fill:#333">{;}</text>
<rect x="0" y="681" width="1366" height="1" fill="#333"/>

<!-- window controls -->
<rect x="8" y="678" width="144" height="27" fill="#fff"/>
<path d="M16 697V689L24 683 32 689V699H16Z" fill="#1fa8b8"/><path d="M20 697L24 686 28 697Z" fill="#0d5f6d"/>
<path d="M33.500 687.500h7v8h-7zM36.500 687.500v-3h7v8h-3" fill="#fff" stroke="#888"/>
<rect x="78.500" y="686.500" width="9" height="9" fill="none" stroke="#666"/>
<path d="M124 686l10 10M134 686l-10 10" stroke="#666"/>
</svg>
</body></html>
